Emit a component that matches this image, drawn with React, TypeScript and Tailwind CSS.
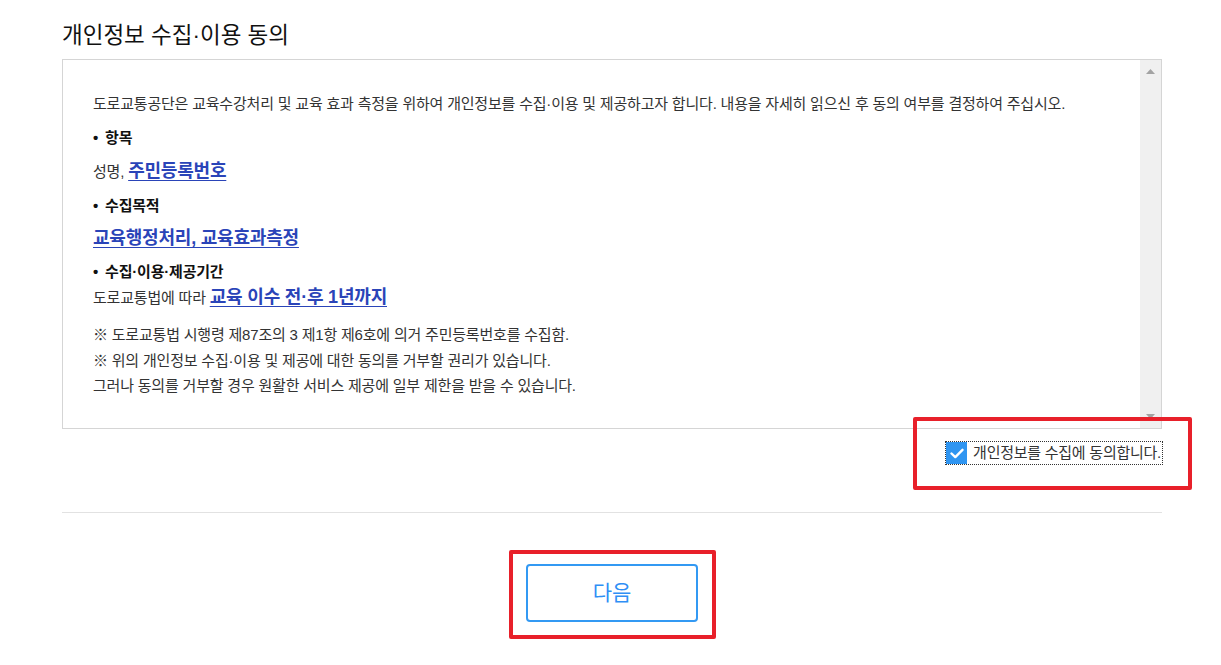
import { useState } from "react";

const font = "font-['Liberation_Sans','Noto_Sans_CJK_KR',sans-serif]";

export default function App() {
  const [agree, setAgree] = useState(true);

  return (
    <div className={`relative w-[1221px] h-[665px] bg-white text-[#222] ${font}`}>
      <div className="ml-[62px] w-[1100px] pt-[20px]">
        {/* Title */}
        <h2 className="text-[22.5px] leading-[32px] text-[#111]">개인정보 수집·이용 동의</h2>

        {/* Terms box */}
        <div className="mt-[7px] h-[370px] border border-[#d5d5d5] flex">
          <div className="flex-1 pl-[30px] pt-[33px] text-[15px] leading-[22px] text-[#333] tracking-[-0.2px]">
            <p>
              도로교통공단은 교육수강처리 및 교육 효과 측정을 위하여 개인정보를 수집·이용 및 제공하고자 합니다. 내용을 자세히 읽으신 후 동의 여부를 결정하여 주십시오.
            </p>
            <p className="mt-[12px] font-bold text-[#111]">
              <span className="mr-[7px]">•</span>항목
            </p>
            <p className="mt-[11px]">
              성명,{" "}
              <a className="text-[18px] font-bold text-[#2a44b8] underline underline-offset-[3px]">주민등록번호</a>
            </p>
            <p className="mt-[12px] font-bold text-[#111]">
              <span className="mr-[7px]">•</span>수집목적
            </p>
            <p className="mt-[10px]">
              <a className="text-[18px] font-bold text-[#2a44b8] underline underline-offset-[3px]">교육행정처리, 교육효과측정</a>
            </p>
            <p className="mt-[11px] font-bold text-[#111]">
              <span className="mr-[7px]">•</span>수집·이용·제공기간
            </p>
            <p className="mt-[3px]">
              도로교통법에 따라{" "}
              <a className="text-[18px] font-bold text-[#2a44b8] underline underline-offset-[3px]">교육 이수 전·후 1년까지</a>
            </p>
            <div className="mt-[13px] leading-[25.5px]">
              <p>※ 도로교통법 시행령 제87조의 3 제1항 제6호에 의거 주민등록번호를 수집함.</p>
              <p>※ 위의 개인정보 수집·이용 및 제공에 대한 동의를 거부할 권리가 있습니다.</p>
              <p>그러나 동의를 거부할 경우 원활한 서비스 제공에 일부 제한을 받을 수 있습니다.</p>
            </div>
          </div>
          {/* scrollbar */}
          <div className="w-[21px] bg-[#f0f0f0] flex flex-col justify-between items-center py-[9px]">
            <svg width="9" height="5" viewBox="0 0 9 5"><path d="M4.5 0L9 5H0z" fill="#a3a3a3" /></svg>
            <svg width="9" height="5" viewBox="0 0 9 5"><path d="M0 0h9L4.5 5z" fill="#a3a3a3" /></svg>
          </div>
        </div>

        {/* Agree checkbox */}
        <div className="flex justify-end pt-[13px]">
          <label
            className="flex items-center gap-[6px] outline-1 outline-dotted outline-[#333] pr-[1px] cursor-pointer"
            onClick={() => setAgree(!agree)}
          >
            <span
              className={`w-[21px] h-[22px] flex items-center justify-center ${agree ? "bg-[#2f95f1]" : "bg-white border border-[#999]"}`}
            >
              {agree && (
                <svg width="14" height="11" viewBox="0 0 14 11">
                  <path d="M1.5 5.5l3.8 3.6L12.5 1.8" stroke="white" strokeWidth="2.4" fill="none" strokeLinecap="round" strokeLinejoin="round" />
                </svg>
              )}
            </span>
            <span className="text-[15px] leading-[22px] text-[#333] tracking-[-0.25px]">개인정보를 수집에 동의합니다.</span>
          </label>
        </div>

        {/* Divider */}
        <div className="mt-[48px] border-t border-[#e2e2e2]" />

        {/* Next button */}
        <div className="flex justify-center pt-[51px]">
          <button className="w-[172px] h-[58px] rounded-[4px] border-2 border-[#3399f3] text-[#2f8ff5] text-[21px] bg-white">
            다음
          </button>
        </div>
      </div>

      {/* red highlight boxes */}
      <div className="absolute left-[913px] top-[417px] w-[279px] h-[73px] border-[4px] border-[#e8202a] rounded-[2px]" />
      <div className="absolute left-[509px] top-[550px] w-[207px] h-[89px] border-[4px] border-[#e8202a] rounded-[2px]" />
    </div>
  );
}
